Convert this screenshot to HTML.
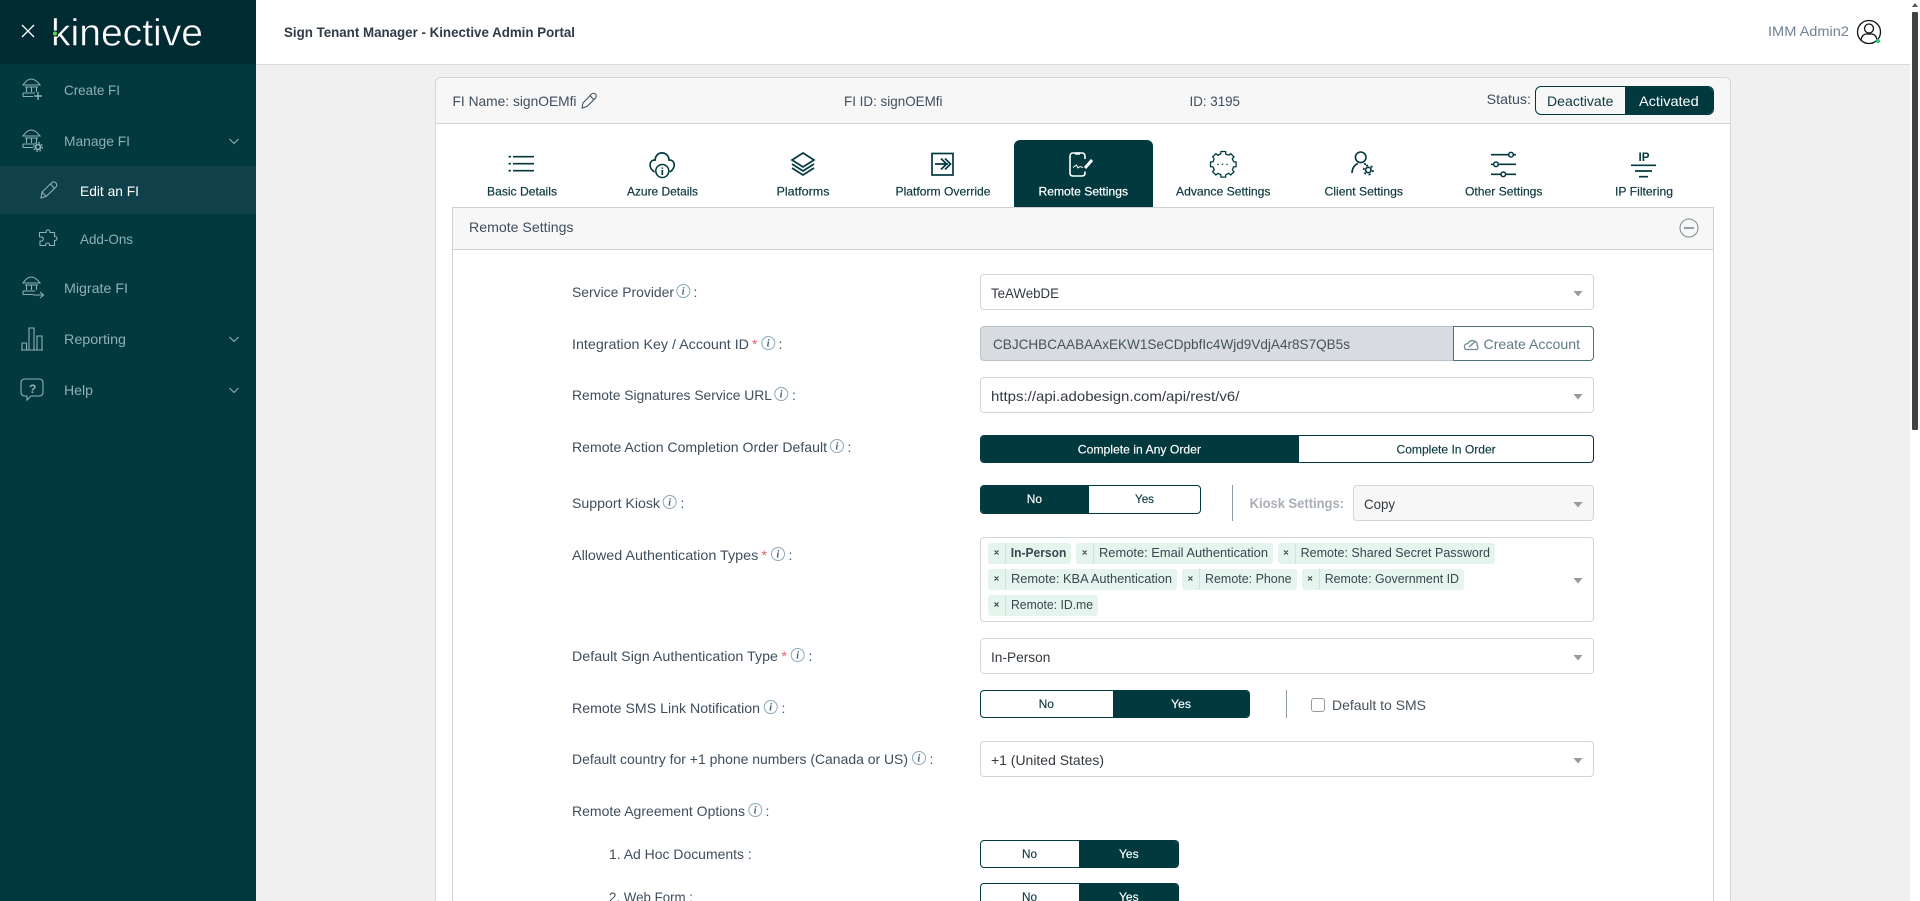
<!DOCTYPE html>
<html lang="en"><head><meta charset="utf-8"><title>Sign Tenant Manager - Kinective Admin Portal</title>
<style>
html,body{margin:0;padding:0;width:1920px;height:901px;overflow:hidden;background:#f0f0f0;font-family:"Liberation Sans",Arial,sans-serif}
#root{position:relative;width:1920px;height:901px;overflow:hidden;background:#f0f0f0}
.b{position:absolute;box-sizing:border-box}
.sel{left:980px;width:614px;height:36px;background:#fff;border:1px solid #d3d5d8;border-radius:4px}
.tg{border:1px solid #02393f;border-radius:4px;background:#fff;overflow:hidden}
.tg i{position:absolute;top:0;bottom:0;background:#02393f;display:block}
.chip{background:#e6f4ee;height:21px;border-radius:3px}
.chip i{position:absolute;left:17px;top:0;bottom:0;width:1px;background:#cfe3da;display:block}
svg{position:absolute;left:0;top:0}
text{font-family:"Liberation Sans",Arial,sans-serif;font-size:14px}
.l{fill:#3f4e5c}.c{fill:#343a40}.t{fill:#0f3a42;stroke:#0f3a42;stroke-width:.2;font-size:12px}.s{fill:#8fb0b4}.w{fill:#fff}
.tgl{font-size:12px;fill:#0f3a42;stroke:#0f3a42;stroke-width:.15}.tgw{font-size:12px;fill:#fff;stroke:#fff;stroke-width:.15}.ch{font-size:12.5px;fill:#3a4650}
.ic{fill:none;stroke:#02393f;stroke-width:1.7}
.sb{fill:none;stroke:#8fb0b4;stroke-width:1.1}
.inf{fill:#fff;stroke:#8aa9b8;stroke-width:1}
.ii{font-family:"Liberation Serif",serif;font-weight:700;font-style:italic;font-size:10px;fill:#3f5a68}
.st{fill:#e4606d}
.ar{fill:#999}
</style></head><body>
<div id="root">
<div class="b" style="left:0;top:0;width:256px;height:901px;background:#02393f"></div>
<div class="b" style="left:0;top:0;width:256px;height:64px;background:#012b33"></div>
<div class="b" style="left:0;top:166px;width:256px;height:48px;background:#10404a"></div>
<div class="b" style="left:256px;top:0;width:1654px;height:65px;background:#fff;border-bottom:1px solid #d8dbe0"></div>
<div class="b" style="left:1910px;top:0;width:10px;height:901px;background:#fff"></div>
<div class="b" style="left:1912px;top:12px;width:6px;height:418px;background:#424242;border-radius:1px"></div>

<div class="b" style="left:435px;top:77px;width:1296px;height:824px;background:#fff;border:1px solid #d6d6d6;border-bottom:0;border-radius:6px 6px 0 0"></div>
<div class="b" style="left:436px;top:78px;width:1294px;height:46px;background:#f7f7f7;border-bottom:1px solid #d2d2d2;border-radius:6px 6px 0 0"></div>
<div class="b tg" style="left:1535px;top:86px;width:179px;height:29px;border-radius:6px;background:#f7f7f7"><i style="left:89px;right:0"></i></div>
<div class="b" style="left:1014px;top:140px;width:139px;height:68px;background:#02393f;border-radius:6px 6px 0 0"></div>
<div class="b" style="left:452px;top:207px;width:1262px;height:694px;background:#fff;border:1px solid #d0d0d0;border-bottom:0"></div>
<div class="b" style="left:453px;top:208px;width:1260px;height:42px;background:#f7f7f7;border-bottom:1px solid #d0d0d0"></div>

<div class="b sel" style="top:274px"></div>
<div class="b" style="left:980px;top:326px;width:474px;height:35px;background:#d8dbe0;border:1px solid #b9c2c8;border-right:0;border-radius:4px 0 0 4px"></div>
<div class="b" style="left:1453px;top:326px;width:141px;height:35px;background:#fff;border:1px solid #4d7278;border-radius:0 4px 4px 0"></div>
<div class="b sel" style="top:377px"></div>
<div class="b tg" style="left:980px;top:435px;width:614px;height:28px"><i style="left:0;width:318px"></i></div>
<div class="b tg" style="left:980px;top:485px;width:221px;height:29px"><i style="left:0;width:108px"></i></div>
<div class="b" style="left:1232px;top:485px;width:1px;height:36px;background:#8e9aa2"></div>
<div class="b sel" style="left:1353px;top:485px;width:241px;background:#f7f7f7"></div>
<div class="b" style="left:980px;top:537px;width:614px;height:85px;background:#fff;border:1px solid #d3d5d8;border-radius:4px"></div>

<div class="b chip" style="left:988px;top:543px;width:83px"><i></i></div>
<div class="b chip" style="left:1076px;top:543px;width:197px"><i></i></div>
<div class="b chip" style="left:1278px;top:543px;width:217px"><i></i></div>
<div class="b chip" style="left:988px;top:569px;width:189px"><i></i></div>
<div class="b chip" style="left:1182px;top:569px;width:115px"><i></i></div>
<div class="b chip" style="left:1302px;top:569px;width:162px"><i></i></div>
<div class="b chip" style="left:988px;top:595px;width:110px"><i></i></div>

<div class="b sel" style="top:638px"></div>
<div class="b tg" style="left:980px;top:690px;width:270px;height:28px"><i style="left:132px;right:0"></i></div>
<div class="b" style="left:1286px;top:690px;width:1px;height:28px;background:#8e9aa2"></div>
<div class="b" style="left:1311px;top:698px;width:14px;height:14px;background:#fff;border:1px solid #9a9a9a;border-radius:3px"></div>
<div class="b sel" style="top:741px"></div>
<div class="b tg" style="left:980px;top:840px;width:199px;height:28px"><i style="left:98px;right:0"></i></div>
<div class="b tg" style="left:980px;top:883px;width:199px;height:28px"><i style="left:98px;right:0"></i></div>

<svg width="1920" height="901" viewBox="0 0 1920 901" xmlns="http://www.w3.org/2000/svg">
<defs>
<g id="bank"><path d="M23 85 Q31 73 40 85 Z"/><path d="M25 87H38M26.500 87V92M31.500 87V92M36.500 87V92M23 93H35M23 96.500H33M23 93V96.500"/></g>
<path id="tooth" d="M10.200 -2.500L12.800 -2.300L12.800 2.300L10.200 2.500A10.500 10.500 0 0 1 9 5.500"/>
</defs>

<!-- logo & close -->
<path d="M22 25L34 37M34 25L22 37" stroke="#fff" stroke-width="1.300" fill="none"/>
<text x="51" y="45.500" class="w" style="font-size:38px;stroke:#012b33;stroke-width:.5" textLength="152" lengthAdjust="spacingAndGlyphs">kinective</text>
<rect x="52" y="30.500" width="6" height="6" fill="#012b33"/>
<circle cx="55" cy="33.500" r="2" fill="#6fd04a"/>

<!-- sidebar -->
<g class="sb"><use href="#bank"/><path d="M38 92V100M34 96H42" stroke-width="1.400"/></g>
<g class="sb" transform="translate(0,51)"><use href="#bank"/></g>
<g class="sb"><circle cx="38" cy="147" r="2.500" stroke-width="1.800"/><circle cx="38" cy="147" r="4.300" stroke-width="1.300" stroke-dasharray="1.700 1.700"/></g>
<g class="sb" transform="translate(0,198)"><use href="#bank"/></g>
<path class="sb" d="M33 295H43M40 292L43.500 295L40 298" stroke-width="1.200"/>
<path class="sb" d="M21 350H43M22 350V343H26.500V350M29 350V328H34V350M37 350V336H42V350"/>
<path class="sb" d="M25 379H39Q43 379 43 383V392Q43 396 39 396H31L27 400V396H25Q21 396 21 392V383Q21 379 25 379Z" stroke-width="1.200"/>
<text x="29" y="393" style="font-size:12px;font-weight:700;fill:#8fb0b4">?</text>
<path class="sb" d="M41 198L42 192L52 182.500Q54 181 56 183Q57.500 185 56 187L46 196.500ZM50.500 184L54.500 188.500M42 192L46 196.500"/>
<path class="sb" d="M46 232.500Q46 229.800 48 229.800Q50 229.800 50 232.500H54.500V236.500Q57 236.500 57 238.500Q57 240.500 54.500 240.500V245.500H49.500Q49.500 243 47.500 243Q45.500 243 45.500 245.500H40V241H42.500Q44 239 42.500 237H39.500V232.500Z"/>
<path class="sb" d="M229.500 139L234 143.500L238.500 139M229.500 337L234 341.500L238.500 337M229.500 388L234 392.500L238.500 388"/>
<text x="64" y="95" class="s" textLength="56" lengthAdjust="spacingAndGlyphs">Create FI</text>
<text x="64" y="146" class="s" textLength="66" lengthAdjust="spacingAndGlyphs">Manage FI</text>
<text x="80" y="196" class="w" textLength="59" lengthAdjust="spacingAndGlyphs">Edit an FI</text>
<text x="80" y="244" class="s" textLength="53" lengthAdjust="spacingAndGlyphs">Add-Ons</text>
<text x="64" y="293" class="s" textLength="64" lengthAdjust="spacingAndGlyphs">Migrate FI</text>
<text x="64" y="344" class="s" textLength="62" lengthAdjust="spacingAndGlyphs">Reporting</text>
<text x="64" y="395" class="s" textLength="29" lengthAdjust="spacingAndGlyphs">Help</text>

<!-- header -->
<text x="284" y="37" style="font-weight:700;fill:#2f3b48" textLength="291" lengthAdjust="spacingAndGlyphs">Sign Tenant Manager - Kinective Admin Portal</text>
<text x="1768" y="36" style="fill:#6f8296" textLength="81" lengthAdjust="spacingAndGlyphs">IMM Admin2</text>
<circle cx="1869" cy="32" r="11.500" fill="none" stroke="#111" stroke-width="1.300"/>
<circle cx="1869" cy="28.500" r="4.500" fill="none" stroke="#111" stroke-width="1.300"/>
<path d="M1861 40Q1862 34.500 1866 34M1877 40Q1876 34.500 1872 34M1866 34H1872" fill="none" stroke="#111" stroke-width="1.300"/>
<circle cx="1878" cy="41" r="2.200" fill="#2ecc71"/>
<path d="M1915 3L1918 7H1912Z" fill="#555"/>

<!-- card header -->
<text x="452.500" y="106" class="l" textLength="124" lengthAdjust="spacingAndGlyphs">FI Name: signOEMfi</text>
<path d="M582 108L583 103L591.500 94Q593.500 92.500 595.500 94Q597 96 595.500 98L587 106.500ZM590 95.500L594 100" fill="none" stroke="#3f4e5c" stroke-width="1"/>
<text x="844" y="106" class="l" textLength="98.500" lengthAdjust="spacingAndGlyphs">FI ID: signOEMfi</text>
<text x="1189.500" y="106" class="l" textLength="50.500" lengthAdjust="spacingAndGlyphs">ID: 3195</text>
<text x="1486.700" y="104" class="l" textLength="44.300" lengthAdjust="spacingAndGlyphs">Status:</text>
<text x="1547" y="106" fill="#0f3a42" textLength="66.500" lengthAdjust="spacingAndGlyphs">Deactivate</text>
<text x="1639" y="106" class="w" textLength="59.700" lengthAdjust="spacingAndGlyphs">Activated</text>

<!-- tabs icons -->
<path class="ic" d="M513 156.700H534M513 163.700H534M513 170.700H534M508.500 156.700H511M508.500 163.700H511M508.500 170.700H511"/>
<path class="ic" stroke-width="1.500" d="M654.500 172C648 168 649 159.500 655.200 160C655.500 150.500 668.500 150.500 669 160C675.300 159.500 676.300 168 669.800 172"/>
<circle cx="662.300" cy="171" r="6.500" class="ic" style="stroke-width:1.500"/>
<path d="M662.300 167.500V168.700M662.300 170V175" stroke="#02393f" stroke-width="1.700"/>
<path class="ic" stroke-width="1.500" d="M803 153L814 160L803 167L792 160ZM792 164L803 171L814 164M792 168L803 175L814 168"/>
<rect x="932" y="153.500" width="21" height="21.500" class="ic"/>
<path class="ic" stroke-width="1.400" d="M935 164H948M941 158.500L946.500 164L941 169.500M945 158.500L950.500 164L945 169.500"/>
<g fill="none" stroke="#fff" stroke-width="1.600">
<path d="M1085 159V156.500Q1085 153 1082 153H1073Q1070 153 1070 156.500V173Q1070 176 1073 176H1082Q1085 176 1085 173V171.500"/>
<path d="M1075 153.500H1080" stroke-width="2.400"/>
<path d="M1073 167.500L1075 166L1076.500 165L1078 168L1080 166.500L1083 167.500" stroke-width="1"/>
<path d="M1085 168L1092 160" stroke-width="3"/>
</g>
<g class="ic" style="stroke-width:1.300" transform="translate(1223.300 164.300)">
<use href="#tooth"/><use href="#tooth" transform="rotate(45)"/><use href="#tooth" transform="rotate(90)"/><use href="#tooth" transform="rotate(135)"/><use href="#tooth" transform="rotate(180)"/><use href="#tooth" transform="rotate(225)"/><use href="#tooth" transform="rotate(270)"/><use href="#tooth" transform="rotate(315)"/>
<path d="M-6 0H6" stroke-dasharray="1.500 3" stroke-width="1.200"/>
</g>
<circle cx="1360.700" cy="157.300" r="5.300" class="ic" style="stroke-width:1.600"/>
<path class="ic" stroke-width="1.600" d="M1352 173Q1352.500 165.500 1358 163.500M1364 163.500L1366 164.500"/>
<circle cx="1368.300" cy="170" r="2.700" class="ic"/>
<circle cx="1368.300" cy="170" r="4.700" class="ic" style="stroke-width:1.600;stroke-dasharray:2.200 2.700"/>
<path class="ic" d="M1491 154.700H1516M1491 164.300H1516M1491 174.300H1516"/>
<circle cx="1511" cy="154.700" r="2.300" fill="#fff" stroke="#02393f" stroke-width="1.500"/>
<circle cx="1496" cy="164.300" r="2.300" fill="#fff" stroke="#02393f" stroke-width="1.500"/>
<circle cx="1503.300" cy="174.300" r="2.300" fill="#fff" stroke="#02393f" stroke-width="1.500"/>
<text x="1638.500" y="161" style="font-size:12px;font-weight:700;fill:#02393f" textLength="11" lengthAdjust="spacingAndGlyphs">IP</text>
<path class="ic" d="M1631 165.300H1656M1635 171H1652M1639 176.700H1648"/>

<!-- tab labels -->
<text x="487" y="195.500" class="t" textLength="70" lengthAdjust="spacingAndGlyphs">Basic Details</text>
<text x="627" y="195.500" class="t" textLength="71" lengthAdjust="spacingAndGlyphs">Azure Details</text>
<text x="776.500" y="195.500" class="t" textLength="53" lengthAdjust="spacingAndGlyphs">Platforms</text>
<text x="895.500" y="195.500" class="t" textLength="95" lengthAdjust="spacingAndGlyphs">Platform Override</text>
<text x="1038.500" y="195.500" class="t" style="fill:#fff;stroke:#fff" textLength="89.500" lengthAdjust="spacingAndGlyphs">Remote Settings</text>
<text x="1176" y="195.500" class="t" textLength="94.500" lengthAdjust="spacingAndGlyphs">Advance Settings</text>
<text x="1324.500" y="195.500" class="t" textLength="78.500" lengthAdjust="spacingAndGlyphs">Client Settings</text>
<text x="1465" y="195.500" class="t" textLength="77.500" lengthAdjust="spacingAndGlyphs">Other Settings</text>
<text x="1615" y="195.500" class="t" textLength="58" lengthAdjust="spacingAndGlyphs">IP Filtering</text>

<!-- panel header -->
<text x="469" y="232" class="l" textLength="104.500" lengthAdjust="spacingAndGlyphs">Remote Settings</text>
<circle cx="1689" cy="228" r="9" fill="none" stroke="#7c8a8f" stroke-width="1"/>
<path d="M1684 228H1694" stroke="#8b9498" stroke-width="1.800"/>

<!-- labels -->
<text x="572" y="297" class="l" textLength="102" lengthAdjust="spacingAndGlyphs">Service Provider</text>
<circle class="inf" cx="683.300" cy="291" r="6.500"/><text class="ii" x="681.800" y="294.500">i</text><text x="693.500" y="297" class="l">:</text>

<text x="572" y="349" class="l" textLength="177" lengthAdjust="spacingAndGlyphs">Integration Key / Account ID</text>
<text x="752" y="349" class="st">*</text>
<circle class="inf" cx="768.300" cy="343" r="6.500"/><text class="ii" x="766.800" y="346.500">i</text><text x="778.500" y="349" class="l">:</text>

<text x="572" y="400" class="l" textLength="200" lengthAdjust="spacingAndGlyphs">Remote Signatures Service URL</text>
<circle class="inf" cx="781.300" cy="394" r="6.500"/><text class="ii" x="779.800" y="397.500">i</text><text x="792" y="400" class="l">:</text>

<text x="572" y="452" class="l" textLength="255" lengthAdjust="spacingAndGlyphs">Remote Action Completion Order Default</text>
<circle class="inf" cx="837" cy="446" r="6.500"/><text class="ii" x="835.500" y="449.500">i</text><text x="847.500" y="452" class="l">:</text>

<text x="572" y="508" class="l" textLength="88" lengthAdjust="spacingAndGlyphs">Support Kiosk</text>
<circle class="inf" cx="669.700" cy="502" r="6.500"/><text class="ii" x="668.200" y="505.500">i</text><text x="680.500" y="508" class="l">:</text>

<text x="572" y="560" class="l" textLength="186.300" lengthAdjust="spacingAndGlyphs">Allowed Authentication Types</text>
<text x="761.500" y="560" class="st">*</text>
<circle class="inf" cx="778" cy="554" r="6.500"/><text class="ii" x="776.500" y="557.500">i</text><text x="788.500" y="560" class="l">:</text>

<text x="572" y="661" class="l" textLength="206" lengthAdjust="spacingAndGlyphs">Default Sign Authentication Type</text>
<text x="781.500" y="661" class="st">*</text>
<circle class="inf" cx="797.700" cy="655" r="6.500"/><text class="ii" x="796.200" y="658.500">i</text><text x="808.500" y="661" class="l">:</text>

<text x="572" y="713" class="l" textLength="188" lengthAdjust="spacingAndGlyphs">Remote SMS Link Notification</text>
<circle class="inf" cx="770.700" cy="707" r="6.500"/><text class="ii" x="769.200" y="710.500">i</text><text x="781.500" y="713" class="l">:</text>

<text x="572" y="764" class="l" textLength="336" lengthAdjust="spacingAndGlyphs">Default country for +1 phone numbers (Canada or US)</text>
<circle class="inf" cx="919" cy="758" r="6.500"/><text class="ii" x="917.500" y="761.500">i</text><text x="929.500" y="764" class="l">:</text>

<text x="572" y="816" class="l" textLength="173" lengthAdjust="spacingAndGlyphs">Remote Agreement Options</text>
<circle class="inf" cx="755.300" cy="810" r="6.500"/><text class="ii" x="753.800" y="813.500">i</text><text x="765.500" y="816" class="l">:</text>

<text x="609" y="859" class="l" textLength="142.700" lengthAdjust="spacingAndGlyphs">1. Ad Hoc Documents :</text>
<text x="609" y="902" class="l" textLength="84" lengthAdjust="spacingAndGlyphs">2. Web Form :</text>

<!-- control text -->
<text x="991" y="298" class="c" textLength="68" lengthAdjust="spacingAndGlyphs">TeAWebDE</text>
<text x="993" y="349" style="fill:#46525c" textLength="357" lengthAdjust="spacingAndGlyphs">CBJCHBCAABAAxEKW1SeCDpbfIc4Wjd9VdjA4r8S7QB5s</text>
<path d="M1465 349Q1463 344 1468 343.500Q1470 339.500 1474 341Q1478 342 1477 345.500Q1479 348 1477 349.500H1466ZM1469 347L1476 341" fill="none" stroke="#6e8c90" stroke-width="1.300"/>
<text x="1483.500" y="349" style="fill:#5f7c82" textLength="96.500" lengthAdjust="spacingAndGlyphs">Create Account</text>
<text x="991" y="401" class="c" textLength="248.400" lengthAdjust="spacingAndGlyphs">https://api.adobesign.com/api/rest/v6/</text>
<text x="1077.800" y="453.500" class="tgw" textLength="123.200" lengthAdjust="spacingAndGlyphs">Complete in Any Order</text>
<text x="1396.500" y="453.500" class="tgl" textLength="99.200" lengthAdjust="spacingAndGlyphs">Complete In Order</text>
<text x="1026.700" y="503" class="tgw" textLength="15.300" lengthAdjust="spacingAndGlyphs">No</text>
<text x="1135" y="503" class="tgl" textLength="19" lengthAdjust="spacingAndGlyphs">Yes</text>
<text x="1249.600" y="508" style="font-weight:700;fill:#a9afb5" textLength="94.400" lengthAdjust="spacingAndGlyphs">Kiosk Settings:</text>
<text x="1364" y="509" class="c" textLength="31" lengthAdjust="spacingAndGlyphs">Copy</text>

<text x="1010.800" y="557" class="ch" style="font-weight:700" textLength="55.500" lengthAdjust="spacingAndGlyphs">In-Person</text>
<text x="1099" y="557" class="ch" textLength="169" lengthAdjust="spacingAndGlyphs">Remote: Email Authentication</text>
<text x="1300.600" y="557" class="ch" textLength="189.400" lengthAdjust="spacingAndGlyphs">Remote: Shared Secret Password</text>
<text x="1011" y="583" class="ch" textLength="161" lengthAdjust="spacingAndGlyphs">Remote: KBA Authentication</text>
<text x="1205" y="583" class="ch" textLength="86.600" lengthAdjust="spacingAndGlyphs">Remote: Phone</text>
<text x="1324.700" y="583" class="ch" textLength="134.300" lengthAdjust="spacingAndGlyphs">Remote: Government ID</text>
<text x="1011" y="609" class="ch" textLength="82" lengthAdjust="spacingAndGlyphs">Remote: ID.me</text>
<g stroke="#3a4650" stroke-width="1.200" fill="none">
<path d="M994.500 550.500l4 4m0-4l-4 4M1082.700 550.500l4 4m0-4l-4 4M1284 550.500l4 4m0-4l-4 4"/>
<path d="M994.500 576.500l4 4m0-4l-4 4M1188.400 576.500l4 4m0-4l-4 4M1308 576.500l4 4m0-4l-4 4"/>
<path d="M994.500 602.500l4 4m0-4l-4 4"/>
</g>

<text x="991" y="662" class="c" textLength="59.400" lengthAdjust="spacingAndGlyphs">In-Person</text>
<text x="1038.600" y="708" class="tgl" textLength="15.400" lengthAdjust="spacingAndGlyphs">No</text>
<text x="1171" y="708" class="tgw" textLength="20" lengthAdjust="spacingAndGlyphs">Yes</text>
<text x="1332" y="710" style="fill:#46525c" textLength="94" lengthAdjust="spacingAndGlyphs">Default to SMS</text>
<text x="991" y="765" class="c" textLength="113" lengthAdjust="spacingAndGlyphs">+1 (United States)</text>
<text x="1022" y="858" class="tgl" textLength="15" lengthAdjust="spacingAndGlyphs">No</text>
<text x="1119" y="858" class="tgw" textLength="19.600" lengthAdjust="spacingAndGlyphs">Yes</text>
<text x="1022" y="901" class="tgl" textLength="15" lengthAdjust="spacingAndGlyphs">No</text>
<text x="1119" y="901" class="tgw" textLength="19.600" lengthAdjust="spacingAndGlyphs">Yes</text>

<!-- select arrows -->
<path class="ar" d="M1573.500 291h9l-4.500 5.500zM1573.500 394h9l-4.500 5.500zM1573.500 502h9l-4.500 5.500zM1573.500 578h9l-4.500 5.500zM1573.500 655h9l-4.500 5.500zM1573.500 758h9l-4.500 5.500z"/>
</svg>
</div>
</body></html>
